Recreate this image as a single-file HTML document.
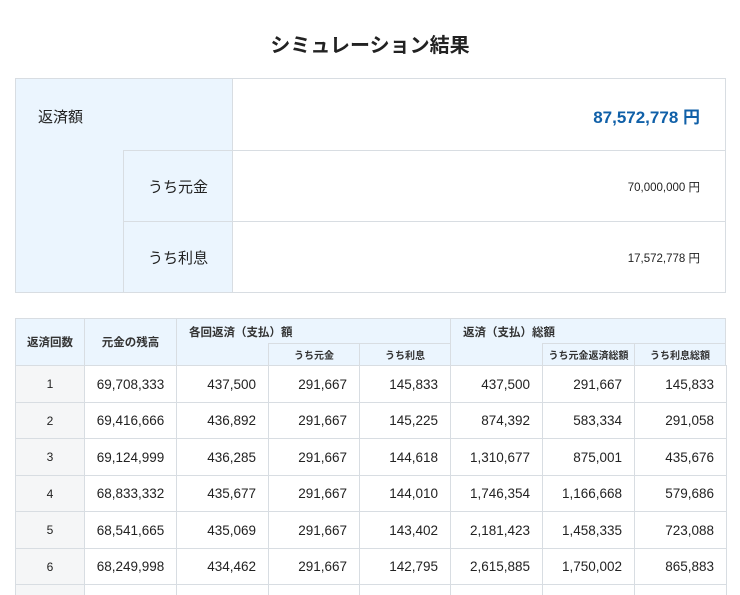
<!DOCTYPE html>
<html><head><meta charset="utf-8"><style>
*{box-sizing:border-box;margin:0;padding:0}
html,body{width:740px;height:595px;overflow:hidden}
body{background:#fff;font-family:"Liberation Sans","Noto Sans CJK JP",sans-serif;color:#222;position:relative}
.a{position:absolute}
h1{position:absolute;left:0;width:740px;top:29px;text-align:center;font-size:20px;font-weight:bold;color:#222}
.bx{border:1px solid #d8dde2}
.hd{background:#ebf5fe}
.c{display:flex;align-items:center;justify-content:center}
.r{display:flex;align-items:center;justify-content:flex-end;padding-right:12px}
.n{font-size:13.5px;color:#222}
.th{font-size:11.5px;font-weight:bold;color:#333}
</style></head><body>
<h1>シミュレーション結果</h1>
<div class="a bx hd" style="left:15px;top:78px;width:218px;height:215px"></div>
<div class="a" style="left:38px;top:106px;font-size:15px">返済額</div>
<div class="a bx" style="left:232px;top:78px;width:494px;height:73px"></div>
<div class="a" style="right:40px;top:103px;font-size:17px;font-weight:bold;color:#1060a8">87,572,778 円</div>
<div class="a bx hd c" style="left:123px;top:150px;width:110px;height:72px;font-size:15px">うち元金</div>
<div class="a bx" style="left:232px;top:150px;width:494px;height:72px"></div>
<div class="a" style="right:40px;top:179px;font-size:11.5px">70,000,000 円</div>
<div class="a bx hd c" style="left:123px;top:221px;width:110px;height:72px;font-size:15px">うち利息</div>
<div class="a bx" style="left:232px;top:221px;width:494px;height:72px"></div>
<div class="a" style="right:40px;top:250px;font-size:11.5px">17,572,778 円</div>

<div class="a bx hd c th" style="left:15px;top:318px;width:70px;height:48px">返済回数</div>
<div class="a bx hd c th" style="left:84px;top:318px;width:93px;height:48px">元金の残高</div>
<div class="a bx hd th" style="left:176px;top:318px;width:275px;height:48px;padding:5px 12px">各回返済（支払）額</div>
<div class="a bx hd c th" style="left:268px;top:343px;width:92px;height:23px;font-size:10px">うち元金</div>
<div class="a bx hd c th" style="left:359px;top:343px;width:92px;height:23px;font-size:10px">うち利息</div>
<div class="a bx hd th" style="left:450px;top:318px;width:276px;height:48px;padding:5px 12px">返済（支払）総額</div>
<div class="a bx hd c th" style="left:542px;top:343px;width:93px;height:23px;font-size:10px">うち元金返済総額</div>
<div class="a bx hd c th" style="left:634px;top:343px;width:92px;height:23px;font-size:10px">うち利息総額</div>
<div id="rows"></div>
<script>
var d=[["1","69,708,333","437,500","291,667","145,833","437,500","291,667","145,833"],
["2","69,416,666","436,892","291,667","145,225","874,392","583,334","291,058"],
["3","69,124,999","436,285","291,667","144,618","1,310,677","875,001","435,676"],
["4","68,833,332","435,677","291,667","144,010","1,746,354","1,166,668","579,686"],
["5","68,541,665","435,069","291,667","143,402","2,181,423","1,458,335","723,088"],
["6","68,249,998","434,462","291,667","142,795","2,615,885","1,750,002","865,883"],
["","","","","","","",""]];
var x=[15,84,176,268,359,450,542,634,726],h="";
d.forEach(function(r,i){var y=Math.round(365+i*36.5);var y2=Math.round(365+(i+1)*36.5);r.forEach(function(v,j){
var cls=j<=1?"c":"r";var bg=j==0?"background:#f5f6f7;":"";
h+='<div class="a bx n '+cls+'" style="'+bg+'left:'+x[j]+'px;top:'+y+'px;width:'+(x[j+1]-x[j]+1)+'px;height:'+(y2-y+1)+'px;'+(j==0?'font-size:12px;':'')+'">'+v+'</div>';});});
document.getElementById("rows").innerHTML=h;
</script>
</body></html>
